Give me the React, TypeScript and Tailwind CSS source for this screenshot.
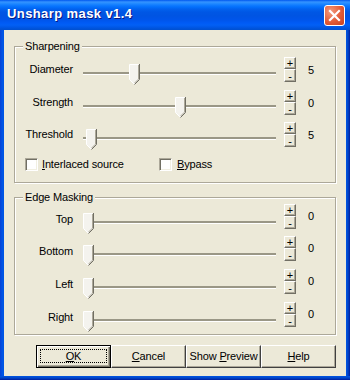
import React from "react";

function Thumb({ left }: { left: number }) {
  return (
    <svg
      className="absolute top-[10px]"
      style={{ left }}
      width="11"
      height="22"
      viewBox="0 0 11 22"
    >
      <path d="M0.5 0.5 H10.5 V15.5 L5.5 20.5 L0.5 15.5 Z" fill="#F4F3EE" />
      <path d="M0.5 15.5 V0.5 H9.5" stroke="#ffffff" fill="none" />
      <path d="M0.5 15.5 L5 20" stroke="#ffffff" fill="none" />
      <path d="M10.5 0 V15.5 L5.5 20.5" stroke="#716F64" fill="none" />
      <path d="M9.5 1 V15.1 L5.5 19.1" stroke="#ACA899" fill="none" />
    </svg>
  );
}

function Spin({ children, h }: { children: React.ReactNode; h: string }) {
  return (
    <div
      className={`w-[12px] ${h} flex items-center justify-center bg-[#ECE9D8] border border-t-white border-l-white border-b-[#716F64] border-r-[#716F64] shadow-[inset_-1px_-1px_0_#ACA899] text-[11px] leading-[10px]`}
    >
      {children}
    </div>
  );
}

function SliderRow({
  label,
  value,
  thumb,
  h,
  labelTop,
  pmTop,
  valueTop,
}: {
  label: string;
  value: string;
  thumb: number;
  h: string;
  labelTop: string;
  pmTop: string;
  valueTop: string;
}) {
  return (
    <div className={`flex items-start ${h}`}>
      <div className={`w-[58px] text-right leading-[13px] ${labelTop}`}>{label}</div>
      <div className="relative ml-[10px] w-[194px] h-full">
        <div className="absolute left-0 right-[1px] top-[18px] h-[3px] bg-[#9A9786] border-b border-white" />
        <Thumb left={thumb} />
      </div>
      <div className={`ml-[7px] flex flex-col ${pmTop}`}>
        <Spin h="h-[12px]">+</Spin>
        <Spin h="h-[13px]">-</Spin>
      </div>
      <div className={`ml-[12px] leading-[13px] ${valueTop}`}>{value}</div>
    </div>
  );
}

function Group({
  title,
  h,
  pt,
  children,
}: {
  title: string;
  h: string;
  pt: string;
  children: React.ReactNode;
}) {
  return (
    <div
      className={`relative w-[322px] ${h} ${pt} border border-[#ACA899] shadow-[inset_1px_1px_0_#fff,1px_1px_0_#fff] flex flex-col`}
    >
      <span className="absolute left-[8px] top-[-7px] px-[2px] bg-[#ECE9D8] leading-[13px]">
        {title}
      </span>
      {children}
    </div>
  );
}

function Checkbox() {
  return (
    <div className="w-[13px] h-[13px] shrink-0 bg-white border border-t-[#ACA899] border-l-[#ACA899] border-b-white border-r-white shadow-[inset_1px_1px_0_#716F64,inset_-1px_-1px_0_#F1EFE2]" />
  );
}

function Btn({ children, def }: { children: React.ReactNode; def?: boolean }) {
  if (def) {
    return (
      <div className="relative w-[75px] h-[23px] flex items-center justify-center border border-black shadow-[inset_1px_1px_0_#fff,inset_-1px_-1px_0_#716F64,inset_-2px_-2px_0_#ACA899]">
        <div className="absolute left-[3px] right-[3px] top-[3px] bottom-[4px] border border-dotted border-black" />
        <span className="leading-[13px]">{children}</span>
      </div>
    );
  }
  return (
    <div className="w-[75px] h-[23px] flex items-center justify-center border border-t-white border-l-white border-b-[#404040] border-r-[#404040] shadow-[inset_-1px_-1px_0_#ACA899]">
      <span className="leading-[13px]">{children}</span>
    </div>
  );
}

export default function App() {
  return (
    <div className="w-[350px] h-[380px] flex flex-col bg-[#0055E5] font-['Liberation_Sans',Arial,sans-serif] text-[11px] tracking-[-0.15px] text-black">
      <div className="h-[30px] shrink-0 flex items-start bg-[linear-gradient(to_bottom,#0058EE_0px,#3593FF_2px,#288EFF_3px,#127DFF_5px,#036FFC_7px,#0262EE_9px,#0057E5_12px,#0054E3_16px,#0055EB_20px,#005BF5_23px,#0260F5_25px,#0058E8_27px,#0052D6_29px,#0050D0_30px)]">
        <span className="ml-[7px] mt-[6px] text-white font-bold text-[13px] leading-[15px] tracking-[0.4px] [text-shadow:1px_1px_#0A1883]">
          Unsharp mask v1.4
        </span>
        <div className="ml-auto mr-[5px] mt-[5px] w-[21px] h-[21px] rounded-[3px] border border-white bg-[radial-gradient(circle_at_30%_30%,#F39A7E,#E25B37_55%,#C8401F)] flex items-center justify-center">
          <svg width="19" height="19" viewBox="0 0 19 19">
            <path d="M5 5 L14 14 M14 5 L5 14" stroke="#fff" strokeWidth="2.2" strokeLinecap="square" />
          </svg>
        </div>
      </div>
      <div className="flex flex-1">
        <div className="w-[4px] bg-[linear-gradient(to_right,#0842D6,#0055E5_60%,#0055E5)]" />
        <div className="flex-1 bg-[#ECE9D8] flex flex-col pt-[16px] pl-[10px]">
          <Group title="Sharpening" h="h-[137px]" pt="pt-[7px]">
            <SliderRow label="Diameter" value="5" thumb={46} h="h-[33px]" labelTop="mt-[9px]" pmTop="mt-[3px]" valueTop="mt-[10px]" />
            <SliderRow label="Strength" value="0" thumb={92} h="h-[32px]" labelTop="mt-[9px]" pmTop="mt-[3px]" valueTop="mt-[10px]" />
            <SliderRow label="Threshold" value="5" thumb={3} h="h-[33px]" labelTop="mt-[9px]" pmTop="mt-[3px]" valueTop="mt-[10px]" />
            <div className="flex items-center h-[13px] mt-[6px]">
              <div className="ml-[10px] w-[134px] flex items-center">
                <Checkbox />
                <span className="ml-[4px] leading-[13px]">
                  <u>I</u>nterlaced source
                </span>
              </div>
              <Checkbox />
              <span className="ml-[5px] leading-[13px]">
                <u>B</u>ypass
              </span>
            </div>
          </Group>
          <div className="mt-[14px]">
            <Group title="Edge Masking" h="h-[138px]" pt="pt-[5px]">
              <SliderRow label="Top" value="0" thumb={0} h="h-[32px]" labelTop="mt-[10px]" pmTop="mt-[1px]" valueTop="mt-[7px]" />
              <SliderRow label="Bottom" value="0" thumb={0} h="h-[33px]" labelTop="mt-[10px]" pmTop="mt-[1px]" valueTop="mt-[7px]" />
              <SliderRow label="Left" value="0" thumb={0} h="h-[33px]" labelTop="mt-[10px]" pmTop="mt-[1px]" valueTop="mt-[7px]" />
              <SliderRow label="Right" value="0" thumb={0} h="h-[33px]" labelTop="mt-[10px]" pmTop="mt-[1px]" valueTop="mt-[7px]" />
            </Group>
          </div>
          <div className="mt-[10px] ml-[22px] flex">
            <Btn def>
              <u>O</u>K
            </Btn>
            <Btn>
              <u>C</u>ancel
            </Btn>
            <Btn>
              Show <u>P</u>review
            </Btn>
            <Btn>
              <u>H</u>elp
            </Btn>
          </div>
        </div>
        <div className="w-[4px] bg-[linear-gradient(to_right,#0055E5,#0045C8_50%,#001C9C)]" />
      </div>
      <div className="h-[4px] shrink-0 bg-[linear-gradient(to_bottom,#0055E5,#0045C8_50%,#001C9C)]" />
    </div>
  );
}
